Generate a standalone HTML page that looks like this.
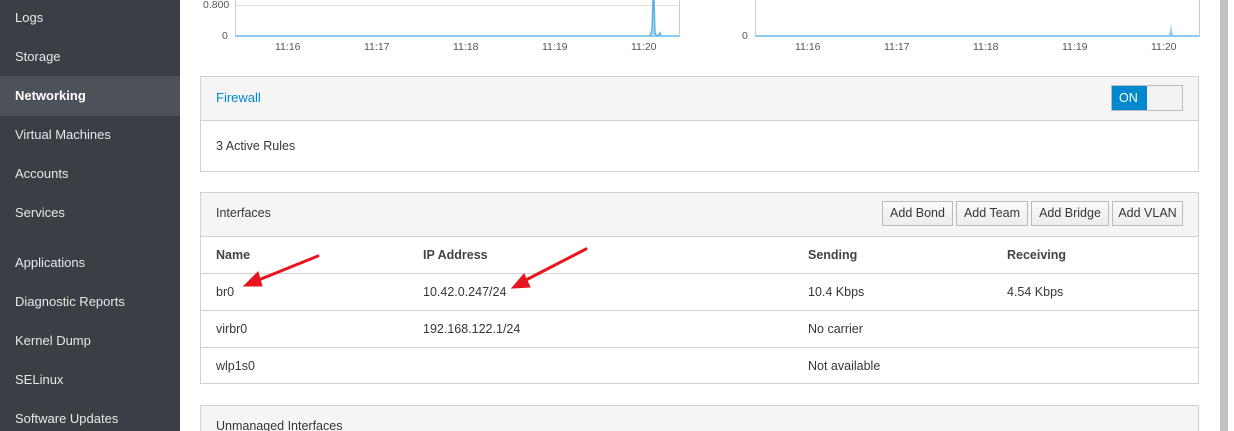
<!DOCTYPE html>
<html><head><style>
*{margin:0;padding:0;box-sizing:border-box}
html,body{width:1234px;height:431px;overflow:hidden}
body{background:#fff;font-family:"Liberation Sans",sans-serif;font-size:12.5px;color:#363636;position:relative}
.a{position:absolute;white-space:nowrap}
.sb{left:0;top:0;width:180px;height:431px;background:#393f44}
.si{left:15px;color:#e8e8e8;font-size:13px}
.panel{position:absolute;left:200px;width:999px;border:1px solid #d1d1d1;background:#fff}
.hd{background:#f5f5f5;border-bottom:1px solid #d1d1d1}
.btn{position:absolute;top:201px;height:25px;border:1px solid #bbb;background:linear-gradient(#fafafa,#ededed);font-size:12.5px;line-height:23px;text-align:center;color:#363636}
.rl{position:absolute;left:201px;width:997px;height:1px;background:#d1d1d1}
.ax{font-size:10.5px;color:#555}
.th{font-weight:bold;color:#444}
</style></head><body>
<div class="a sb"></div>
<div class="a" style="left:0;top:76px;width:180px;height:40px;background:#4d5258"></div>
<div class="a si" style="top:10px">Logs</div>
<div class="a si" style="top:49px">Storage</div>
<div class="a si" style="top:88px;color:#fff;font-weight:bold">Networking</div>
<div class="a si" style="top:127px">Virtual Machines</div>
<div class="a si" style="top:166px">Accounts</div>
<div class="a si" style="top:205px">Services</div>
<div class="a si" style="top:255px">Applications</div>
<div class="a si" style="top:294px">Diagnostic Reports</div>
<div class="a si" style="top:333px">Kernel Dump</div>
<div class="a si" style="top:372px">SELinux</div>
<div class="a si" style="top:411px">Software Updates</div>

<div class="a" style="left:235px;top:0;width:445px;height:37px;border-left:1px solid #ccc;border-right:1px solid #ccc;border-bottom:2px solid #8ccbf0"></div>
<div class="a" style="left:235px;top:5px;width:445px;height:1px;background:#ddd"></div>
<div class="a ax" style="left:203px;top:-1px">0.800</div>
<div class="a ax" style="left:222px;top:30px">0</div>
<svg class="a" style="left:640px;top:0" width="40" height="37"><path d="M10 36 L12 30 L13 0 L14 0 L15 34 L18 36 L20 33 L21 36" stroke="#5ab3e6" stroke-width="1.5" fill="#a9d8f3"/></svg>
<div class="a" style="left:755px;top:0;width:445px;height:37px;border-left:1px solid #ccc;border-right:1px solid #ccc;border-bottom:2px solid #8ccbf0"></div>
<div class="a ax" style="left:742px;top:30px">0</div>
<svg class="a" style="left:1160px;top:18px" width="20" height="19"><path d="M8 19 L10 14 L11 5 L12 14 L14 19Z" fill="#8ccbf0"/></svg>
<div class="a ax" style="left:275px;top:41px">11:16</div><div class="a ax" style="left:364px;top:41px">11:17</div><div class="a ax" style="left:453px;top:41px">11:18</div><div class="a ax" style="left:542px;top:41px">11:19</div><div class="a ax" style="left:631px;top:41px">11:20</div>
<div class="a ax" style="left:795px;top:41px">11:16</div><div class="a ax" style="left:884px;top:41px">11:17</div><div class="a ax" style="left:973px;top:41px">11:18</div><div class="a ax" style="left:1062px;top:41px">11:19</div><div class="a ax" style="left:1151px;top:41px">11:20</div>

<div class="panel" style="top:76px;height:96px"><div class="hd" style="height:44px"></div></div>
<div class="a" style="left:216px;top:90px;color:#0088ce;font-size:13px">Firewall</div>
<div class="a" style="left:1111px;top:85px;width:72px;height:26px;border:1px solid #bbb;background:#f2f2f2"></div>
<div class="a" style="left:1112px;top:86px;width:35px;height:24px;background:#0088ce;color:#fff;font-size:12.5px;line-height:24px;padding-left:7px">ON</div>
<div class="a" style="left:216px;top:139px">3 Active Rules</div>

<div class="panel" style="top:192px;height:192px"><div class="hd" style="height:44px"></div></div>
<div class="a" style="left:216px;top:206px">Interfaces</div>
<div class="btn" style="left:882px;width:71px">Add Bond</div>
<div class="btn" style="left:956px;width:72px">Add Team</div>
<div class="btn" style="left:1031px;width:78px">Add Bridge</div>
<div class="btn" style="left:1112px;width:71px">Add VLAN</div>
<div class="a th" style="left:216px;top:248px">Name</div>
<div class="a th" style="left:423px;top:248px">IP Address</div>
<div class="a th" style="left:808px;top:248px">Sending</div>
<div class="a th" style="left:1007px;top:248px">Receiving</div>
<div class="rl" style="top:273px"></div><div class="rl" style="top:310px"></div><div class="rl" style="top:347px"></div>
<div class="a" style="left:216px;top:285px">br0</div><div class="a" style="left:423px;top:285px">10.42.0.247/24</div><div class="a" style="left:808px;top:285px">10.4 Kbps</div><div class="a" style="left:1007px;top:285px">4.54 Kbps</div>
<div class="a" style="left:216px;top:322px">virbr0</div><div class="a" style="left:423px;top:322px">192.168.122.1/24</div><div class="a" style="left:808px;top:322px">No carrier</div>
<div class="a" style="left:216px;top:359px">wlp1s0</div><div class="a" style="left:808px;top:359px">Not available</div>

<div class="panel" style="top:405px;height:30px"><div class="hd" style="height:30px"></div></div>
<div class="a" style="left:216px;top:419px">Unmanaged Interfaces</div>

<svg class="a" style="left:0;top:0" width="1234" height="431">
<g stroke="#e8141e" stroke-width="3" fill="#e8141e" stroke-linecap="round">
<line x1="318" y1="256" x2="256" y2="281"/><path d="M244 286 L258 272 L262 286Z" stroke-width="1"/>
<line x1="586" y1="249" x2="524" y2="281"/><path d="M512 288 L524 274 L530 287Z" stroke-width="1"/>
</g></svg>

<div class="a" style="left:1210px;top:0;width:24px;height:431px;background:#fff"></div>
<div class="a" style="left:1220px;top:0;width:8px;height:431px;background:#c1c1c1"></div>
</body></html>
